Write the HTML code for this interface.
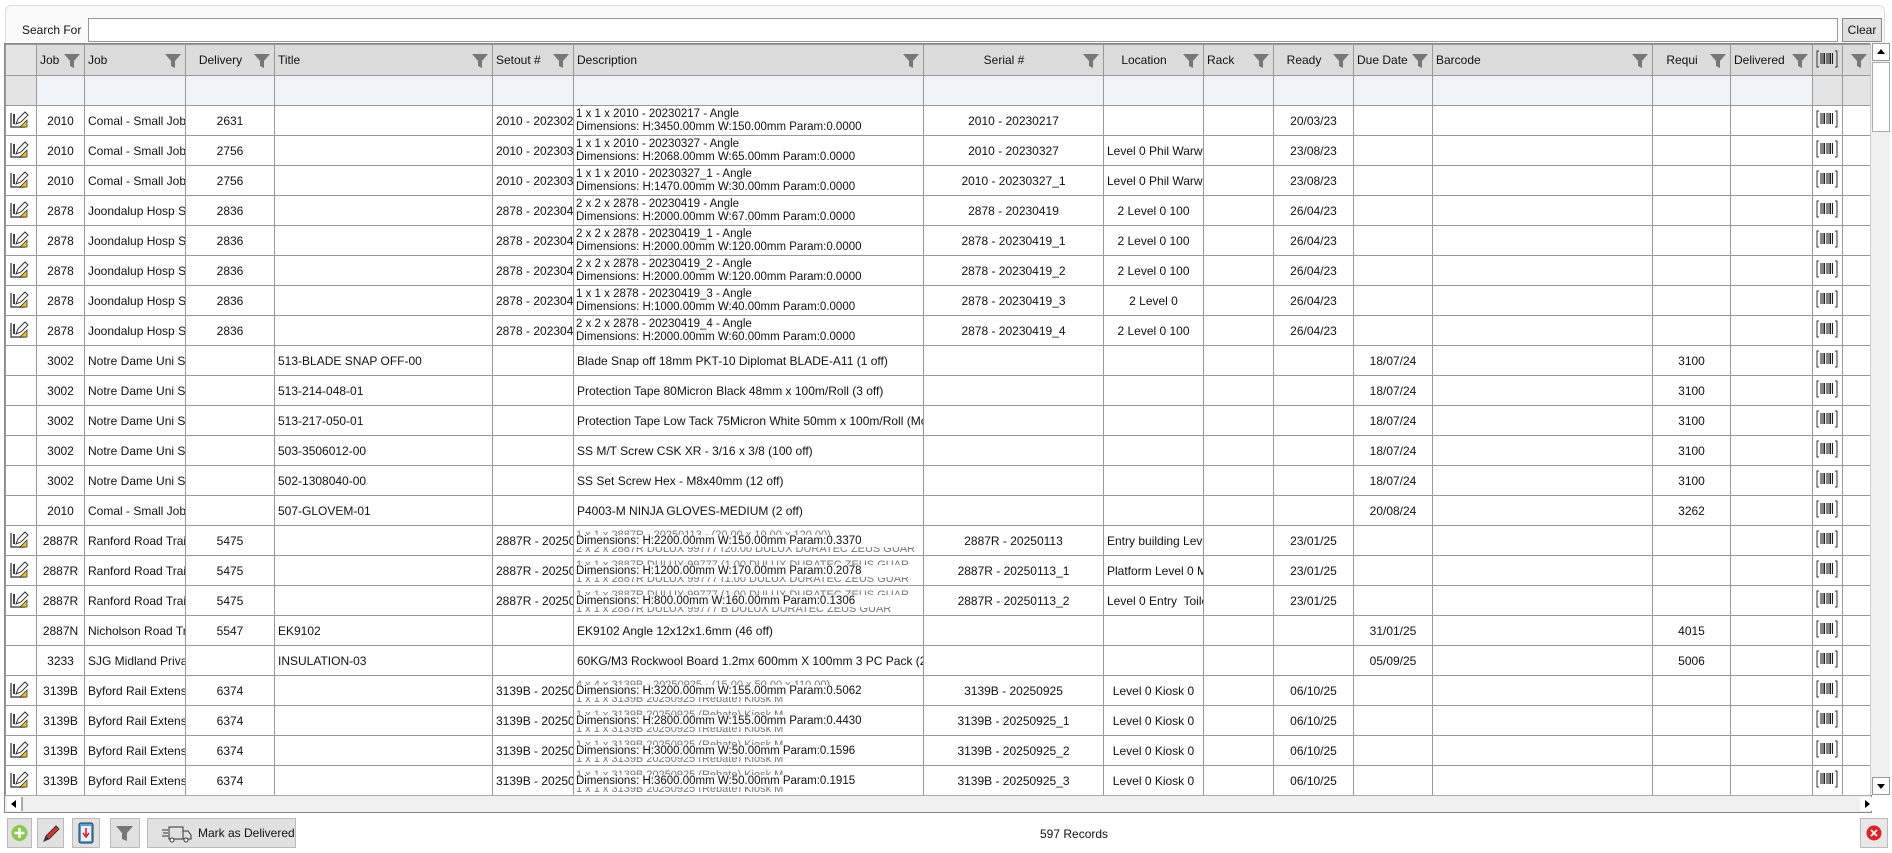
<!DOCTYPE html>
<html><head><meta charset="utf-8">
<style>
*{box-sizing:border-box;margin:0;padding:0}
body{width:1892px;height:853px;background:#fff;font-family:"Liberation Sans",sans-serif;font-size:12px;color:#111;position:relative;overflow:hidden}
.sbox{position:absolute;left:5px;top:5px;width:1880px;height:40px;border:1px solid #ddd;border-bottom:none;border-radius:6px 6px 0 0;background:#fafafa}
.lbl{position:absolute;left:16px;top:17px;font-size:12px}
.inp{position:absolute;left:82px;top:12px;width:1750px;height:24px;border:1px solid #999;background:#fff}
.clr{position:absolute;left:1836px;top:12px;width:40px;height:24px;border:1px solid #888;background:#e1e1e1;font-size:12px;text-align:center;line-height:22px}
.grid{position:absolute;left:4px;top:43px;width:1868px;height:770px;border:1px solid #888;overflow:hidden}
table{border-collapse:collapse;table-layout:fixed;width:1866px}
td{border:1px solid #999;height:30px;white-space:nowrap;overflow:hidden;padding:0 3px;vertical-align:middle}
tr.h td{background:#dcdcdc;height:31px;position:relative;padding-right:22px}
tr.f td{background:#f0f3f8;height:30px}
tr.h td:first-child,tr.f td:first-child{background:#e4e4e4}
.c{text-align:center}
.fn{position:absolute;right:4px;top:8px}
.d{font-size:11.5px;line-height:12.5px;padding:0 2px;white-space:normal}
.d div{white-space:nowrap;overflow:hidden}
.o{color:#777;height:6px;overflow:hidden;line-height:12px;font-size:11px}
.o2{color:#777;height:5px;overflow:hidden;line-height:4px;font-size:11px}
.vs{position:absolute;left:1870px;top:43px;width:20px;height:752px;background:#f0f0f0;border-left:1px solid #ccc}
.hs{position:absolute;left:5px;top:795px;width:1866px;height:17px;background:#f0f0f0;border-top:1px solid #aaa}
.tb{position:absolute;top:818px;height:30px;border:1px solid #bbb;background:#e1e1e1}
</style></head><body>
<svg width="0" height="0" style="position:absolute"><defs>
<symbol id="fi" viewBox="0 0 16 16"><path d="M0 1h16L10 8v7l-4 -2V8z" fill="#777"/></symbol>
<symbol id="ed" viewBox="0 0 20 20"><path d="M2 4v14h14" fill="none" stroke="#555" stroke-width="1.5"/><rect x="4" y="5" width="2" height="10" fill="#444"/><path d="M7 15l2-5 7-7 3 3-7 7z" fill="#fff" stroke="#333"/><path d="M11 18l7-7v7z" fill="#f0c020" stroke="#333" stroke-width=".8"/></symbol>
<symbol id="bc" viewBox="0 0 22 18"><path d="M3 1H1v16h2M19 1h2v16h-2" fill="none" stroke="#333"/><path d="M5 3v11M7 3v11M8.5 3v11M11 3v11M13 3v11M14.5 3v11M16.5 3v11" stroke="#222" stroke-width="1.1"/></symbol>
</defs></svg>
<div class="sbox"><div class="lbl">Search For</div><div class="inp"></div><div class="clr">Clear</div></div>
<div class="grid"><table>
<colgroup><col style="width:31px"><col style="width:48px"><col style="width:101px"><col style="width:89px"><col style="width:218px"><col style="width:81px"><col style="width:350px"><col style="width:180px"><col style="width:100px"><col style="width:70px"><col style="width:80px"><col style="width:79px"><col style="width:220px"><col style="width:78px"><col style="width:82px"><col style="width:30px"><col style="width:29px"></colgroup>
<tr class="h"><td></td><td>Job<svg class="fn" width="16" height="16"><use href="#fi"/></svg></td><td>Job<svg class="fn" width="16" height="16"><use href="#fi"/></svg></td><td class="c">Delivery<svg class="fn" width="16" height="16"><use href="#fi"/></svg></td><td>Title<svg class="fn" width="16" height="16"><use href="#fi"/></svg></td><td>Setout #<svg class="fn" width="16" height="16"><use href="#fi"/></svg></td><td>Description<svg class="fn" width="16" height="16"><use href="#fi"/></svg></td><td class="c">Serial #<svg class="fn" width="16" height="16"><use href="#fi"/></svg></td><td class="c">Location<svg class="fn" width="16" height="16"><use href="#fi"/></svg></td><td>Rack<svg class="fn" width="16" height="16"><use href="#fi"/></svg></td><td class="c">Ready<svg class="fn" width="16" height="16"><use href="#fi"/></svg></td><td>Due Date<svg class="fn" width="16" height="16"><use href="#fi"/></svg></td><td>Barcode<svg class="fn" width="16" height="16"><use href="#fi"/></svg></td><td class="c">Requi<svg class="fn" width="16" height="16"><use href="#fi"/></svg></td><td>Delivered<svg class="fn" width="16" height="16"><use href="#fi"/></svg></td><td style="padding:0 3px"><svg width="22" height="18"><use href="#bc"/></svg></td><td style="padding:0"><svg class="fn" width="16" height="16"><use href="#fi"/></svg></td></tr>
<tr class="f"><td></td><td></td><td></td><td></td><td></td><td></td><td></td><td></td><td></td><td></td><td></td><td></td><td></td><td></td><td></td><td style="background:#e4e4e4"></td><td style="background:#e4e4e4"></td></tr>

<tr><td><svg width="20" height="20"><use href="#ed"/></svg></td><td class="c">2010</td><td>Comal - Small Job</td><td class="c">2631</td><td></td><td>2010 - 20230217</td><td class="d"><div>1 x 1 x 2010 - 20230217 - Angle</div><div>Dimensions: H:3450.00mm W:150.00mm Param:0.0000</div></td><td class="c">2010 - 20230217</td><td></td><td></td><td class="c">20/03/23</td><td></td><td></td><td></td><td></td><td><svg width="22" height="18"><use href="#bc"/></svg></td><td></td></tr>
<tr><td><svg width="20" height="20"><use href="#ed"/></svg></td><td class="c">2010</td><td>Comal - Small Job</td><td class="c">2756</td><td></td><td>2010 - 20230327</td><td class="d"><div>1 x 1 x 2010 - 20230327 - Angle</div><div>Dimensions: H:2068.00mm W:65.00mm Param:0.0000</div></td><td class="c">2010 - 20230327</td><td>Level 0 Phil Warwick</td><td></td><td class="c">23/08/23</td><td></td><td></td><td></td><td></td><td><svg width="22" height="18"><use href="#bc"/></svg></td><td></td></tr>
<tr><td><svg width="20" height="20"><use href="#ed"/></svg></td><td class="c">2010</td><td>Comal - Small Job</td><td class="c">2756</td><td></td><td>2010 - 20230327</td><td class="d"><div>1 x 1 x 2010 - 20230327_1 - Angle</div><div>Dimensions: H:1470.00mm W:30.00mm Param:0.0000</div></td><td class="c">2010 - 20230327_1</td><td>Level 0 Phil Warwick</td><td></td><td class="c">23/08/23</td><td></td><td></td><td></td><td></td><td><svg width="22" height="18"><use href="#bc"/></svg></td><td></td></tr>
<tr><td><svg width="20" height="20"><use href="#ed"/></svg></td><td class="c">2878</td><td>Joondalup Hosp Stage</td><td class="c">2836</td><td></td><td>2878 - 20230419</td><td class="d"><div>2 x 2 x 2878 - 20230419 - Angle</div><div>Dimensions: H:2000.00mm W:67.00mm Param:0.0000</div></td><td class="c">2878 - 20230419</td><td class="c">2 Level 0 100</td><td></td><td class="c">26/04/23</td><td></td><td></td><td></td><td></td><td><svg width="22" height="18"><use href="#bc"/></svg></td><td></td></tr>
<tr><td><svg width="20" height="20"><use href="#ed"/></svg></td><td class="c">2878</td><td>Joondalup Hosp Stage</td><td class="c">2836</td><td></td><td>2878 - 20230419</td><td class="d"><div>2 x 2 x 2878 - 20230419_1 - Angle</div><div>Dimensions: H:2000.00mm W:120.00mm Param:0.0000</div></td><td class="c">2878 - 20230419_1</td><td class="c">2 Level 0 100</td><td></td><td class="c">26/04/23</td><td></td><td></td><td></td><td></td><td><svg width="22" height="18"><use href="#bc"/></svg></td><td></td></tr>
<tr><td><svg width="20" height="20"><use href="#ed"/></svg></td><td class="c">2878</td><td>Joondalup Hosp Stage</td><td class="c">2836</td><td></td><td>2878 - 20230419</td><td class="d"><div>2 x 2 x 2878 - 20230419_2 - Angle</div><div>Dimensions: H:2000.00mm W:120.00mm Param:0.0000</div></td><td class="c">2878 - 20230419_2</td><td class="c">2 Level 0 100</td><td></td><td class="c">26/04/23</td><td></td><td></td><td></td><td></td><td><svg width="22" height="18"><use href="#bc"/></svg></td><td></td></tr>
<tr><td><svg width="20" height="20"><use href="#ed"/></svg></td><td class="c">2878</td><td>Joondalup Hosp Stage</td><td class="c">2836</td><td></td><td>2878 - 20230419</td><td class="d"><div>1 x 1 x 2878 - 20230419_3 - Angle</div><div>Dimensions: H:1000.00mm W:40.00mm Param:0.0000</div></td><td class="c">2878 - 20230419_3</td><td class="c">2 Level 0</td><td></td><td class="c">26/04/23</td><td></td><td></td><td></td><td></td><td><svg width="22" height="18"><use href="#bc"/></svg></td><td></td></tr>
<tr><td><svg width="20" height="20"><use href="#ed"/></svg></td><td class="c">2878</td><td>Joondalup Hosp Stage</td><td class="c">2836</td><td></td><td>2878 - 20230419</td><td class="d"><div>2 x 2 x 2878 - 20230419_4 - Angle</div><div>Dimensions: H:2000.00mm W:60.00mm Param:0.0000</div></td><td class="c">2878 - 20230419_4</td><td class="c">2 Level 0 100</td><td></td><td class="c">26/04/23</td><td></td><td></td><td></td><td></td><td><svg width="22" height="18"><use href="#bc"/></svg></td><td></td></tr>

<tr><td></td><td class="c">3002</td><td>Notre Dame Uni Stage</td><td></td><td>513-BLADE SNAP OFF-00</td><td></td><td>Blade Snap off 18mm PKT-10 Diplomat BLADE-A11 (1 off)</td><td></td><td></td><td></td><td></td><td class="c">18/07/24</td><td></td><td class="c">3100</td><td></td><td><svg width="22" height="18"><use href="#bc"/></svg></td><td></td></tr>
<tr><td></td><td class="c">3002</td><td>Notre Dame Uni Stage</td><td></td><td>513-214-048-01</td><td></td><td>Protection Tape 80Micron Black 48mm x 100m/Roll (3 off)</td><td></td><td></td><td></td><td></td><td class="c">18/07/24</td><td></td><td class="c">3100</td><td></td><td><svg width="22" height="18"><use href="#bc"/></svg></td><td></td></tr>
<tr><td></td><td class="c">3002</td><td>Notre Dame Uni Stage</td><td></td><td>513-217-050-01</td><td></td><td>Protection Tape Low Tack 75Micron White 50mm x 100m/Roll (Mc</td><td></td><td></td><td></td><td></td><td class="c">18/07/24</td><td></td><td class="c">3100</td><td></td><td><svg width="22" height="18"><use href="#bc"/></svg></td><td></td></tr>
<tr><td></td><td class="c">3002</td><td>Notre Dame Uni Stage</td><td></td><td>503-3506012-00</td><td></td><td>SS M/T Screw CSK XR - 3/16 x 3/8 (100 off)</td><td></td><td></td><td></td><td></td><td class="c">18/07/24</td><td></td><td class="c">3100</td><td></td><td><svg width="22" height="18"><use href="#bc"/></svg></td><td></td></tr>
<tr><td></td><td class="c">3002</td><td>Notre Dame Uni Stage</td><td></td><td>502-1308040-00</td><td></td><td>SS Set Screw Hex - M8x40mm (12 off)</td><td></td><td></td><td></td><td></td><td class="c">18/07/24</td><td></td><td class="c">3100</td><td></td><td><svg width="22" height="18"><use href="#bc"/></svg></td><td></td></tr>
<tr><td></td><td class="c">2010</td><td>Comal - Small Job</td><td></td><td>507-GLOVEM-01</td><td></td><td>P4003-M NINJA GLOVES-MEDIUM (2 off)</td><td></td><td></td><td></td><td></td><td class="c">20/08/24</td><td></td><td class="c">3262</td><td></td><td><svg width="22" height="18"><use href="#bc"/></svg></td><td></td></tr>

<tr><td><svg width="20" height="20"><use href="#ed"/></svg></td><td class="c">2887R</td><td>Ranford Road Train</td><td class="c">5475</td><td></td><td>2887R - 20250113</td><td class="d"><div class="o">1 x 1 x 2887R - 20250113 - (20.00 x 10.00 x 120.00)</div><div>Dimensions: H:2200.00mm W:150.00mm Param:0.3370</div><div class="o2">2 x 2 x 2887R DULUX 99777 (20.00 DULUX DURATEC ZEUS GUAR</div></td><td class="c">2887R - 20250113</td><td>Entry building Level 0</td><td></td><td class="c">23/01/25</td><td></td><td></td><td></td><td></td><td><svg width="22" height="18"><use href="#bc"/></svg></td><td></td></tr>
<tr><td><svg width="20" height="20"><use href="#ed"/></svg></td><td class="c">2887R</td><td>Ranford Road Train</td><td class="c">5475</td><td></td><td>2887R - 20250113</td><td class="d"><div class="o">1 x 1 x 2887R DULUX 99777 (1.00 DULUX DURATEC ZEUS GUAR</div><div>Dimensions: H:1200.00mm W:170.00mm Param:0.2078</div><div class="o2">1 x 1 x 2887R DULUX 99777 (1.00 DULUX DURATEC ZEUS GUAR</div></td><td class="c">2887R - 20250113_1</td><td>Platform Level 0 M</td><td></td><td class="c">23/01/25</td><td></td><td></td><td></td><td></td><td><svg width="22" height="18"><use href="#bc"/></svg></td><td></td></tr>
<tr><td><svg width="20" height="20"><use href="#ed"/></svg></td><td class="c">2887R</td><td>Ranford Road Train</td><td class="c">5475</td><td></td><td>2887R - 20250113</td><td class="d"><div class="o">1 x 1 x 2887R DULUX 99777 (1.00 DULUX DURATEC ZEUS GUAR</div><div>Dimensions: H:800.00mm W:160.00mm Param:0.1306</div><div class="o2">1 x 1 x 2887R DULUX 99777 B DULUX DURATEC ZEUS GUAR</div></td><td class="c">2887R - 20250113_2</td><td>Level 0 Entry&nbsp; Toilet</td><td></td><td class="c">23/01/25</td><td></td><td></td><td></td><td></td><td><svg width="22" height="18"><use href="#bc"/></svg></td><td></td></tr>
<tr><td></td><td class="c">2887N</td><td>Nicholson Road Train</td><td class="c">5547</td><td>EK9102</td><td></td><td>EK9102 Angle 12x12x1.6mm (46 off)</td><td></td><td></td><td></td><td></td><td class="c">31/01/25</td><td></td><td class="c">4015</td><td></td><td><svg width="22" height="18"><use href="#bc"/></svg></td><td></td></tr>
<tr><td></td><td class="c">3233</td><td>SJG Midland Private</td><td></td><td>INSULATION-03</td><td></td><td>60KG/M3 Rockwool Board 1.2mx 600mm X 100mm 3 PC Pack (2 off)</td><td></td><td></td><td></td><td></td><td class="c">05/09/25</td><td></td><td class="c">5006</td><td></td><td><svg width="22" height="18"><use href="#bc"/></svg></td><td></td></tr>
<tr><td><svg width="20" height="20"><use href="#ed"/></svg></td><td class="c">3139B</td><td>Byford Rail Extension</td><td class="c">6374</td><td></td><td>3139B - 20250925</td><td class="d"><div class="o">4 x 4 x 3139B - 20250925 - (15.00 x 50.00 x 110.00)</div><div>Dimensions: H:3200.00mm W:155.00mm Param:0.5062</div><div class="o2">1 x 1 x 3139B 20250925 (Rebate) Kiosk M</div></td><td class="c">3139B - 20250925</td><td class="c">Level 0 Kiosk 0</td><td></td><td class="c">06/10/25</td><td></td><td></td><td></td><td></td><td><svg width="22" height="18"><use href="#bc"/></svg></td><td></td></tr>
<tr><td><svg width="20" height="20"><use href="#ed"/></svg></td><td class="c">3139B</td><td>Byford Rail Extension</td><td class="c">6374</td><td></td><td>3139B - 20250925</td><td class="d"><div class="o">1 x 1 x 3139B 20250925 (Rebate) Kiosk M</div><div>Dimensions: H:2800.00mm W:155.00mm Param:0.4430</div><div class="o2">1 x 1 x 3139B 20250925 (Rebate) Kiosk M</div></td><td class="c">3139B - 20250925_1</td><td class="c">Level 0 Kiosk 0</td><td></td><td class="c">06/10/25</td><td></td><td></td><td></td><td></td><td><svg width="22" height="18"><use href="#bc"/></svg></td><td></td></tr>
<tr><td><svg width="20" height="20"><use href="#ed"/></svg></td><td class="c">3139B</td><td>Byford Rail Extension</td><td class="c">6374</td><td></td><td>3139B - 20250925</td><td class="d"><div class="o">1 x 1 x 3139B 20250925 (Rebate) Kiosk M</div><div>Dimensions: H:3000.00mm W:50.00mm Param:0.1596</div><div class="o2">1 x 1 x 3139B 20250925 (Rebate) Kiosk M</div></td><td class="c">3139B - 20250925_2</td><td class="c">Level 0 Kiosk 0</td><td></td><td class="c">06/10/25</td><td></td><td></td><td></td><td></td><td><svg width="22" height="18"><use href="#bc"/></svg></td><td></td></tr>
<tr><td><svg width="20" height="20"><use href="#ed"/></svg></td><td class="c">3139B</td><td>Byford Rail Extension</td><td class="c">6374</td><td></td><td>3139B - 20250925</td><td class="d"><div class="o">1 x 1 x 3139B 20250925 (Rebate) Kiosk M</div><div>Dimensions: H:3600.00mm W:50.00mm Param:0.1915</div><div class="o2">1 x 1 x 3139B 20250925 (Rebate) Kiosk M</div></td><td class="c">3139B - 20250925_3</td><td class="c">Level 0 Kiosk 0</td><td></td><td class="c">06/10/25</td><td></td><td></td><td></td><td></td><td><svg width="22" height="18"><use href="#bc"/></svg></td><td></td></tr>
<tr><td></td><td></td><td></td><td></td><td></td><td></td><td></td><td></td><td></td><td></td><td></td><td></td><td></td><td></td><td></td><td></td><td></td></tr>
</table></div>
<div class="vs">
<div style="position:absolute;left:1px;top:0;width:18px;height:18px;background:#fff;border:1px solid #999;"><svg width="16" height="16"><path d="M4 10h8L8 5z" fill="#000"/></svg></div>
<div style="position:absolute;left:1px;top:19px;width:18px;height:70px;background:#fff;border:1px solid #aaa"></div>
<div style="position:absolute;left:1px;top:734px;width:18px;height:18px;background:#fff;border:1px solid #999;"><svg width="16" height="16"><path d="M4 6h8L8 11z" fill="#000"/></svg></div>
</div>
<div class="hs">
<div style="position:absolute;left:2px;top:1px;width:16px;height:14px;background:#fff;border-right:2px solid #aaa"><svg width="14" height="14"><path d="M9 3v8L4 7z" fill="#000"/></svg></div>
<div style="position:absolute;left:1855px;top:1px;width:16px;height:14px;background:#fff"><svg width="14" height="14"><path d="M5 3v8L10 7z" fill="#000"/></svg></div>
</div>
<div class="tb" style="left:7px;width:25px"><svg width="23" height="28"><circle cx="11.5" cy="14" r="8" fill="#8cc84b"/><path d="M11.5 9v10M6.5 14h10" stroke="#fff" stroke-width="2.4"/></svg></div>
<div class="tb" style="left:37px;width:27px"><svg width="25" height="28"><path d="M6 22l2-5 10-10 3 3-10 10z" fill="#d33" stroke="#333"/><path d="M6 22l2-5 3 3z" fill="#333"/></svg></div>
<div class="tb" style="left:72px;width:28px"><svg width="26" height="28"><rect x="6" y="4" width="14" height="20" rx="2" fill="#4aa3df" stroke="#234"/><rect x="8" y="7" width="10" height="15" fill="#eef"/><path d="M13 9v8M10 14l3 4 3-4" stroke="#d22" stroke-width="1.6" fill="none"/></svg></div>
<div class="tb" style="left:110px;width:30px"><svg width="28" height="28"><path d="M5 7h17l-6 7v8l-5-2v-6z" fill="#777"/></svg></div>
<div class="tb" style="left:147px;width:149px"><svg width="34" height="28" style="position:absolute;left:12px;top:0"><path d="M9 8h14v12H9zM23 12h5l3 4v4h-8z" fill="none" stroke="#333"/><circle cx="12" cy="21" r="2" fill="#fff" stroke="#333"/><circle cx="26" cy="21" r="2" fill="#fff" stroke="#333"/><path d="M2 11h6M3 14h5M2 17h6" stroke="#333"/></svg><span style="position:absolute;left:50px;top:7px;font-size:12px;white-space:nowrap">Mark as Delivered</span></div>
<div style="position:absolute;left:1040px;top:827px;font-size:12px">597 Records</div>
<div class="tb" style="left:1860px;width:28px;background:#e8e8e8"><svg width="26" height="28"><circle cx="13" cy="14" r="7.5" fill="#e0202a"/><path d="M10 11l6 6M16 11l-6 6" stroke="#fff" stroke-width="1.8"/></svg></div>
</body></html>
